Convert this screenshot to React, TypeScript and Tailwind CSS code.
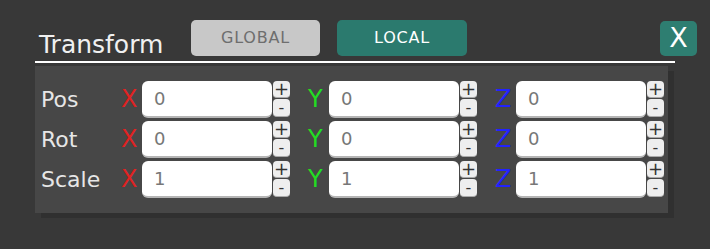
import React from "react";

const font = { fontFamily: '"DejaVu Sans", "Liberation Sans", sans-serif' };

type Axis = { name: string; color: string; value: string };

function Stepper() {
  return (
    <div className="flex flex-col gap-[1px] w-[17px] ml-[1px]">
      <button className="h-[17px] rounded-[4px] bg-[#eeeeee] border-b border-[#aaaaaa] text-[#333] text-[18px] leading-[16px] flex items-center justify-center">+</button>
      <button className="h-[18px] rounded-[4px] bg-[#eeeeee] border-b border-[#aaaaaa] text-[#333] text-[16px] leading-[16px] flex items-center justify-center">-</button>
    </div>
  );
}

function Field({ axis }: { axis: Axis }) {
  return (
    <div className="flex items-center">
      <div className={`w-[21px] text-[24px] ${axis.color}`}>{axis.name}</div>
      <div className="w-[130px] h-[37px] bg-white rounded-[6px] border-b-2 border-[#b5b5b5] flex items-center pl-[12px] text-[18px] text-[#777]">
        {axis.value}
      </div>
      <Stepper />
    </div>
  );
}

function Row({ label, value }: { label: string; value: string }) {
  const axes: Axis[] = [
    { name: "X", color: "text-[#e02222]", value },
    { name: "Y", color: "text-[#22dd22]", value },
    { name: "Z", color: "text-[#2222ff]", value },
  ];
  return (
    <div className="flex items-center h-[40px]">
      <div className="w-[86px] pl-[6px] text-[22px] text-[#e6e6e6]">{label}</div>
      <div className="flex gap-[18px]">
        {axes.map((a) => (
          <Field key={a.name} axis={a} />
        ))}
      </div>
    </div>
  );
}

export default function App() {
  return (
    <div className="w-full h-[249px] bg-[#383838] pl-[35px] pt-[20px]" style={font}>
      <div className="w-[640px]">
        <div className="flex items-center h-[36px]">
          <div className="w-[156px] pl-[4px] pt-[14px] text-[25px] text-[#f0f0f0]">Transform</div>
          <button className="w-[129px] h-[36px] rounded-[5px] bg-[#c8c8c8] text-[#6e6e6e] text-[16px] tracking-wider">GLOBAL</button>
          <button className="ml-[17px] w-[130px] h-[36px] rounded-[5px] bg-[#2b7a6e] text-white text-[16px] tracking-wider">LOCAL</button>
          <button className="ml-auto mr-[-22px] w-[37px] h-[35px] rounded-[5px] bg-[#2e7e71] text-white text-[27px] flex items-center justify-center">X</button>
        </div>
        <div className="mt-[5px] h-[2px] bg-white" />
        <div className="mt-[3px] w-[633px] h-[147px] bg-[#474747] pt-[13px] shadow-[6px_5px_0_#303030]">
          <Row label="Pos" value="0" />
          <Row label="Rot" value="0" />
          <Row label="Scale" value="1" />
        </div>
      </div>
    </div>
  );
}
